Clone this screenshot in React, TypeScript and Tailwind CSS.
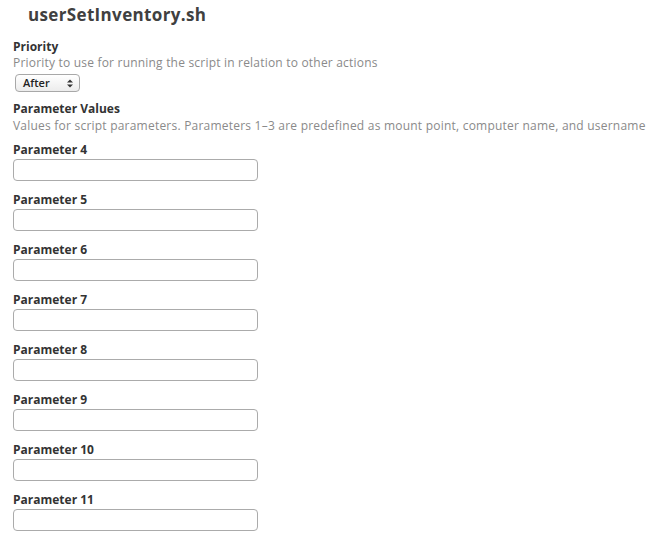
import React from 'react';

const params = [4, 5, 6, 7, 8, 9, 10, 11];

export default function App() {
  return (
    <div className="w-[659px] h-[542px] bg-white overflow-hidden text-[#333]" style={{ fontFamily: '"Open Sans", "DejaVu Sans", sans-serif' }}>
      <h1 className="pl-[28px] pt-[3px] text-[17px] font-bold leading-[24px] tracking-[0.35px] text-[#404040]">userSetInventory.sh</h1>

      <div className="px-[13px] pt-[12px]">
        {/* Priority */}
        <div className="text-[12px] font-bold leading-[16px]">Priority</div>
        <div className="text-[12px] leading-[16px] tracking-[0.2px] text-[#8a8a8a]">Priority to use for running the script in relation to other actions</div>
        <div className="mt-[3px] ml-[2px] flex h-[18px] w-[65px] items-center justify-between rounded-[4px] border border-[#a8a8a8] bg-gradient-to-b from-white to-[#ececec] pl-[7px] pr-[6px] text-[11px] font-semibold text-[#222]">
          <span>After</span>
          <svg width="6" height="9" viewBox="0 0 6 9">
            <path d="M0 3.5 L3 0.5 L6 3.5 Z" fill="#333" />
            <path d="M0 5.5 L3 8.5 L6 5.5 Z" fill="#333" />
          </svg>
        </div>

        {/* Parameter Values */}
        <div className="mt-[9px] text-[12px] font-bold leading-[16px]">Parameter Values</div>
        <div className="mt-[1px] text-[12px] leading-[16px] tracking-[0.22px] text-[#8a8a8a] whitespace-nowrap">Values for script parameters. Parameters 1–3 are predefined as mount point, computer name, and username</div>

        <div className="mt-[8px] flex flex-col gap-[11px]">
          {params.map((n) => (
            <div key={n} className="flex flex-col">
              <div className="text-[12px] font-bold leading-[16px]">Parameter {n}</div>
              <div className="mt-[1px] h-[22px] w-[245px] rounded-[4px] border border-[#ababab] bg-white" />
            </div>
          ))}
        </div>
      </div>
    </div>
  );
}
